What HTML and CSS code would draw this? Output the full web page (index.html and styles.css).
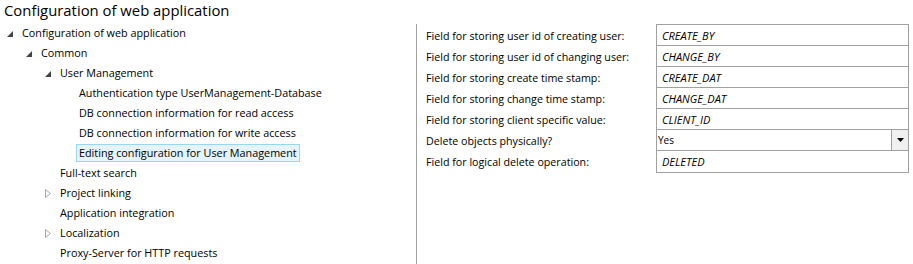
FILE: index.html
```html
<!DOCTYPE html>
<html lang="en">

<head>
    <meta charset="UTF-8">
    <title>Configuration of web application</title>
    <link rel="stylesheet" href="styles.css">
</head>

<body>
    <h1 class="title">Configuration of web application</h1>

    <div class="main">
        <!-- navigation tree, left pane -->
        <ul class="tree">
            <li>
                <div class="node"><span class="toggle open"><svg width="6" height="6" viewBox="0 0 6 6"><path d="M6 0V6H0Z" fill="#444"/></svg></span><span class="label">Configuration of web application</span></div>
                <ul>
                    <li>
                        <div class="node"><span class="toggle open"><svg width="6" height="6" viewBox="0 0 6 6"><path d="M6 0V6H0Z" fill="#444"/></svg></span><span class="label">Common</span></div>
                        <ul>
                            <li>
                                <div class="node"><span class="toggle open"><svg width="6" height="6" viewBox="0 0 6 6"><path d="M6 0V6H0Z" fill="#444"/></svg></span><span class="label">User Management</span></div>
                                <ul>
                                    <li><div class="node"><span class="toggle"></span><span class="label">Authentication type UserManagement-Database</span></div></li>
                                    <li><div class="node"><span class="toggle"></span><span class="label">DB connection information for read access</span></div></li>
                                    <li><div class="node"><span class="toggle"></span><span class="label">DB connection information for write access</span></div></li>
                                    <li><div class="node"><span class="toggle"></span><span class="label selected">Editing configuration for User Management</span></div></li>
                                </ul>
                            </li>
                            <li><div class="node"><span class="toggle"></span><span class="label">Full-text search</span></div></li>
                            <li><div class="node"><span class="toggle closed"><svg width="6" height="9" viewBox="0 0 6 9"><path d="M0.5 0.5V8.5L5.5 4.5Z" fill="none" stroke="#a6a6a6"/></svg></span><span class="label">Project linking</span></div></li>
                            <li><div class="node"><span class="toggle"></span><span class="label">Application integration</span></div></li>
                            <li><div class="node"><span class="toggle closed"><svg width="6" height="9" viewBox="0 0 6 9"><path d="M0.5 0.5V8.5L5.5 4.5Z" fill="none" stroke="#a6a6a6"/></svg></span><span class="label">Localization</span></div></li>
                            <li><div class="node"><span class="toggle"></span><span class="label">Proxy-Server for HTTP requests</span></div></li>
                        </ul>
                    </li>
                </ul>
            </li>
        </ul>

        <div class="divider"></div>

        <!-- property grid of the selected node -->
        <div class="props">
            <div class="prop-label">Field for storing user id of creating user:</div>
            <div class="prop-value">CREATE_BY</div>

            <div class="prop-label">Field for storing user id of changing user:</div>
            <div class="prop-value">CHANGE_BY</div>

            <div class="prop-label">Field for storing create time stamp:</div>
            <div class="prop-value">CREATE_DAT</div>

            <div class="prop-label">Field for storing change time stamp:</div>
            <div class="prop-value">CHANGE_DAT</div>

            <div class="prop-label">Field for storing client specific value:</div>
            <div class="prop-value">CLIENT_ID</div>

            <div class="prop-label">Delete objects physically?</div>
            <div class="prop-value combo">
                <span class="combo-text">Yes</span>
                <span class="combo-button"><svg width="7" height="4" viewBox="0 0 7 4"><path d="M0 0H7L3.5 4Z" fill="#000"/></svg></span>
            </div>

            <div class="prop-label">Field for logical delete operation:</div>
            <div class="prop-value last">DELETED</div>
        </div>
    </div>
</body>

</html>
```

FILE: styles.css
```css
body {
    font-family: "Open Sans", "Noto Sans", sans-serif;
    background-color: #ffffff;
    color: #000000;
    margin: 0;
    width: 913px;
    height: 264px;
    overflow: hidden;
}

.title {
    font-size: 14.85px;
    font-weight: normal;
    margin: 0;
    padding-left: 4px;
    height: 23px;
    line-height: 21px;
}

.main {
    display: flex;
    align-items: flex-start;
}

/* tree */

.tree,
.tree ul {
    list-style: none;
    margin: 0;
    padding: 0;
}

.tree {
    width: 413px;
    padding-left: 3px;
    font-size: 10.8px;
}

.tree ul {
    padding-left: 19px;
}

.node {
    display: flex;
    align-items: center;
    height: 20px;
}

.toggle {
    width: 16px;
    height: 20px;
    flex-shrink: 0;
    display: flex;
    align-items: center;
    padding-left: 4px;
    box-sizing: border-box;
}

.toggle.open svg {
    margin-top: 2px;
}

.label {
    border: 1px solid transparent;
    padding: 0 2px;
    line-height: 16px;
    white-space: nowrap;
}

.label.selected {
    background-color: #e5f3fb;
    border-color: #99d5f4;
}

.divider {
    width: 1px;
    background-color: #a0a0a0;
    margin-top: 1px;
    height: 250px;
}

/* property grid */

.props {
    display: grid;
    grid-template-columns: 230px 253px;
    grid-auto-rows: 21px;
    padding-left: 9px;
    margin-top: 1px;
}

.prop-label {
    font-size: 10.7px;
    display: flex;
    align-items: center;
    padding-top: 2px;
    white-space: nowrap;
}

.prop-value {
    border: 1px solid #a0a0a0;
    border-bottom: none;
    font-size: 11px;
    font-style: italic;
    padding-left: 5px;
    display: flex;
    align-items: center;
}

.prop-value.last {
    border-bottom: 1px solid #a0a0a0;
    height: 21px;
}

.prop-value.combo {
    font-style: normal;
    font-size: 10px;
    padding-left: 1px;
    justify-content: space-between;
    align-items: stretch;
}

.combo-text {
    display: flex;
    align-items: center;
}

.combo-button {
    width: 16px;
    background-color: #f0f0f0;
    border-left: 1px solid #a0a0a0;
    display: flex;
    align-items: center;
    justify-content: center;
}
```
